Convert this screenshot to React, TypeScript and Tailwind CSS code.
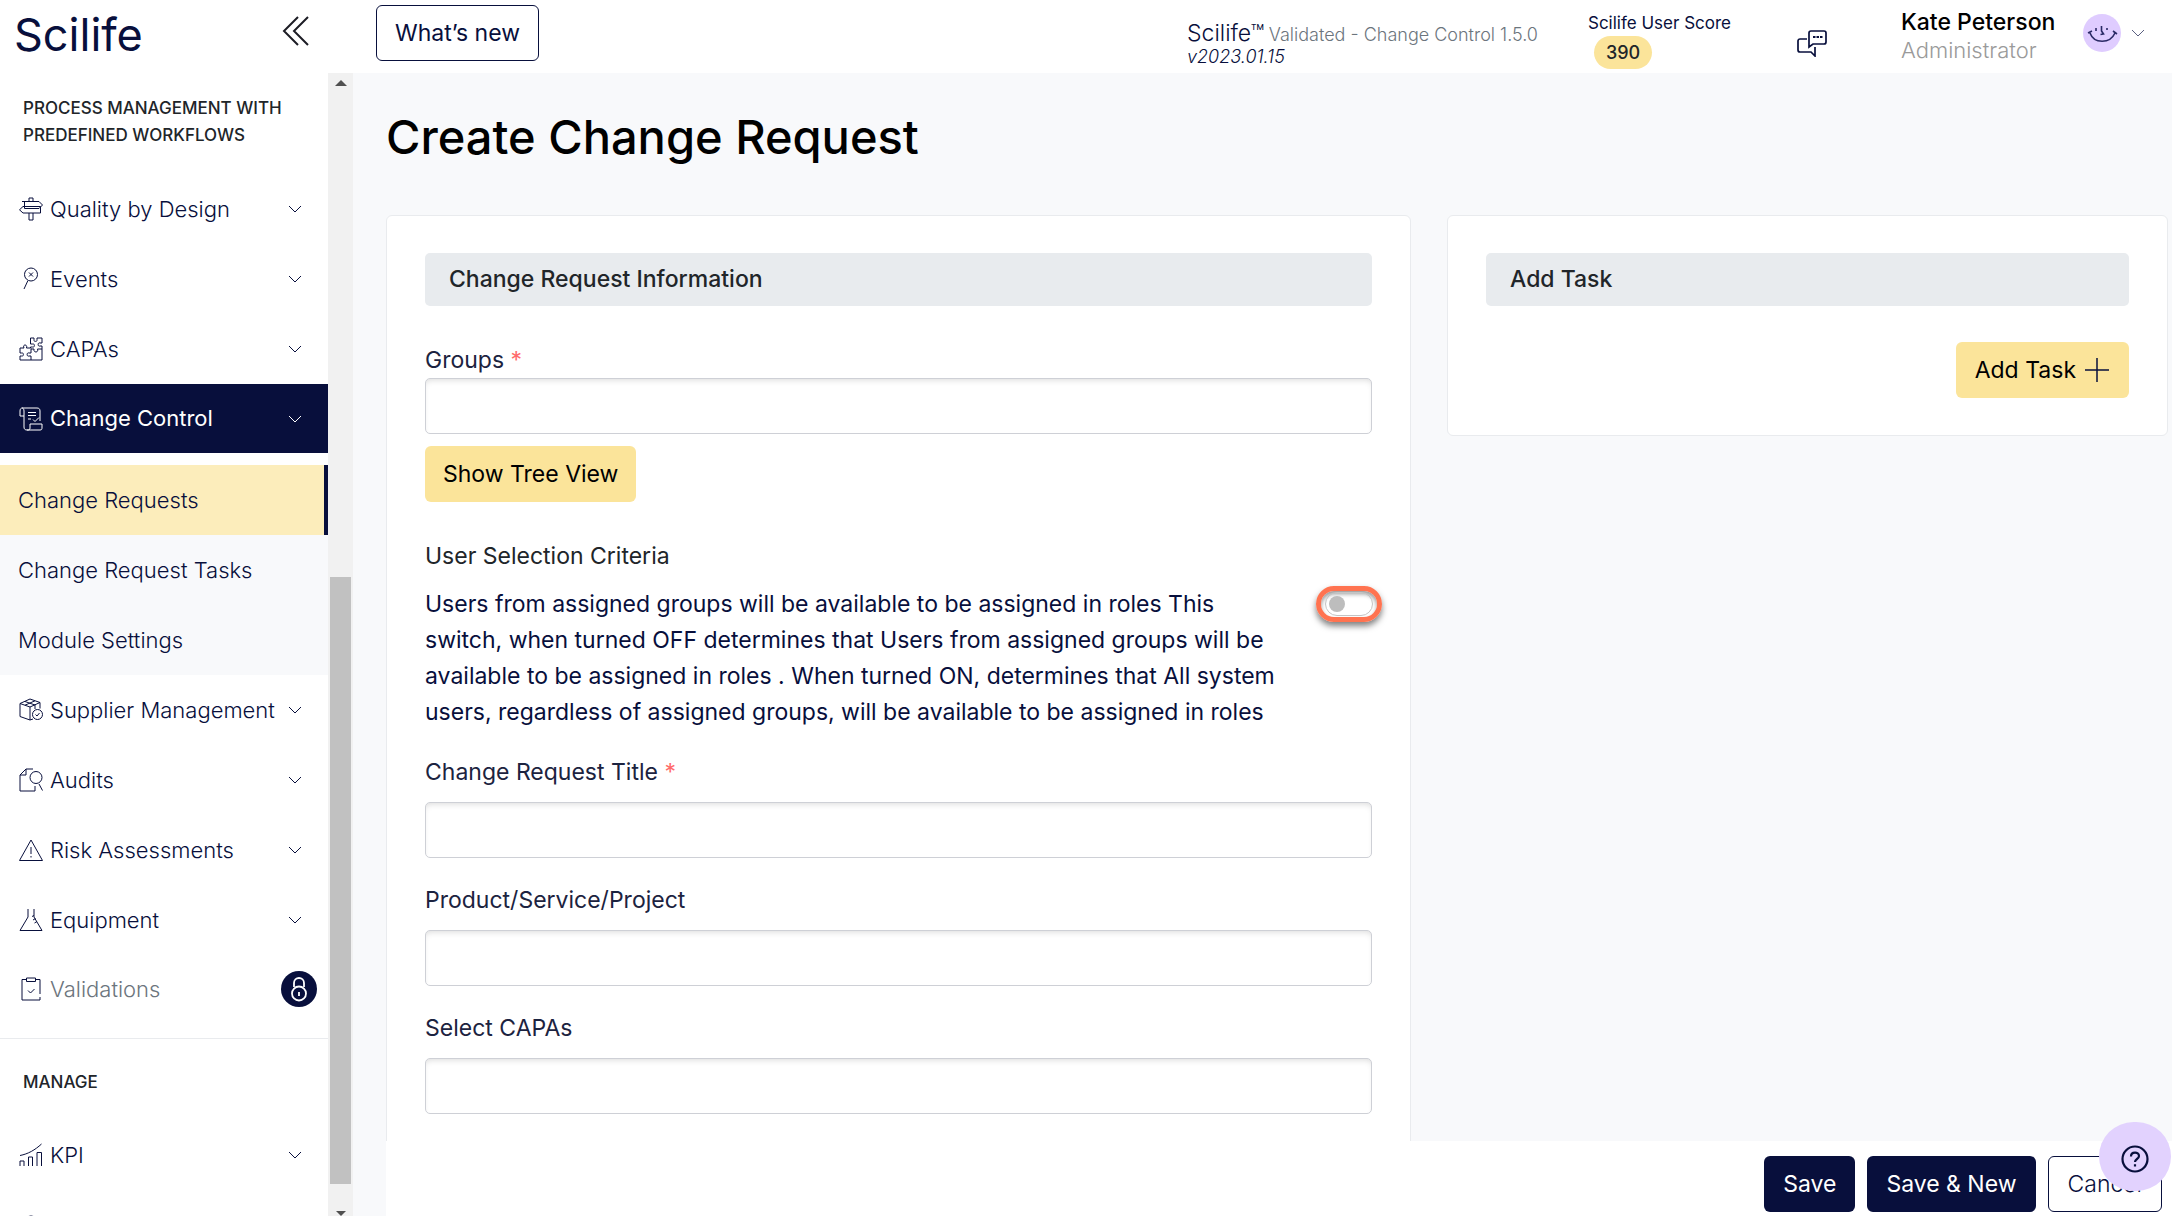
import type { ReactNode } from 'react'
import clsx from 'clsx'

const icons: Record<string, ReactNode> = {
  design: (
    <>
      <path d="M10 4V1h4v3M10 16v7h4v-7M3 4.500h17l3.500 3.500-3.500 3.500H5.500V4.500" />
      <path d="M20 9.500h1.500V16H4L.500 12.800 4 9.500h16" />
    </>
  ),
  events: (
    <>
      <circle cx="12" cy="7.500" r="6.500" />
      <path d="M8.800 13.800 5 22M10 5.500l4 4M14 5.500l-4 4" />
    </>
  ),
  capas: (
    <>
      <path d="M11.500 1h3.500v1.500c-1 2.500 4 2.500 3 0V1h5v5h-2c-2.500-1-2.500 4 0 3h2v14h-22v-4h1.500c2.500 1 2.500-4 0-3H1v-5h4c-2-4 4-4 2.500 0h4v-1h2c2.500 1 2.500-4 0-3h-2z" />
      <path d="M12 11.500v4.500h-2c-2.500-1-2.500 4 0 3h2v4M12 12h3c-1 4 5 4 3.500 0H23" />
    </>
  ),
  change: (
    <>
      <path d="M5 9H1V4c0-4 4-4 4 0v16c0 2 1 3 3 3h13c2 0 2-1 2-3v-3H11v4c0 2-1 2-3 2M3 1h15c2 0 3 1 3 3v10" />
      <path d="M9 5.500h8M9 8.500h8M9 12h3M14 12.500l2 2 4-4" />
    </>
  ),
  supplier: (
    <>
      <path d="M1 5.500 11 1l10 3.500v6M1 5.500v13L11 22l3-1M1 5.500 11 9l10-4.500M11 9v13M6 3.500l10 3.500v4M16 2.800 6 7.200" />
      <circle cx="18.500" cy="16.500" r="5" />
      <path d="m16.500 16.500 1.500 1.500 2.500-3" />
    </>
  ),
  audits: (
    <>
      <path d="M14 1H7L1 7v16h15v-5M7 1v6H1" />
      <circle cx="17" cy="9.500" r="6" />
      <path d="m20 16 3.500 6.500" />
    </>
  ),
  risk: <path d="M12 2 23.500 22.500H.500zM12 9v7M12 18v1.500" />,
  equipment: <path d="M9 1v8L1 22.500h22L15 9V1M15 7.500l-2 1M16.500 10.500l-2.500 1.500M18 13.500 15.500 15" />,
  validations: (
    <>
      <path d="M7 2.500H3V23h18v-3M17 2.500h4V17" />
      <path d="M7.500 1h9v3.500h-9zM9 13.500l2.500 2.500 4-4" />
    </>
  ),
  kpi: <path d="M1 23v-5h4v5M9.500 23V14h4v9M18 23V9.500h4.500V23M1 12.500C9 11 16 7 22.500 1" />,
  next: <circle cx="12" cy="12" r="9" />,
}

const workflows = [
  { label: 'Supplier Management', icon: 'supplier' },
  { label: 'Audits', icon: 'audits' },
  { label: 'Risk Assessments', icon: 'risk' },
  { label: 'Equipment', icon: 'equipment' },
]

function Icon({ name }: { name: string }) {
  return (
    <svg viewBox="0 0 24 24" className="size-6 shrink-0" fill="none" stroke="currentColor" strokeWidth="1">
      {icons[name]}
    </svg>
  )
}

function Chevron() {
  return (
    <svg viewBox="0 0 14 8" className="h-2 w-3.5 shrink-0" fill="none" stroke="currentColor" strokeWidth="1">
      <path d="m1 1 6 6 6-6" />
    </svg>
  )
}

function NavItem({ label, icon, active }: { label: string; icon: string; active?: boolean }) {
  return (
    <button
      className={clsx(
        'flex w-full shrink-0 items-center gap-[7px] pl-[19px] pr-[26px] text-left',
        active ? 'h-[69px] bg-[#080f3c] text-white' : 'h-[70px] font-light'
      )}
    >
      <Icon name={icon} />
      <span className="flex-1 whitespace-nowrap">{label}</span>
      <Chevron />
    </button>
  )
}

function Field({ id, label, required, tight }: { id: string; label: string; required?: boolean; tight?: boolean }) {
  return (
    <div className={clsx('flex flex-col', !tight && 'gap-3')}>
      <label htmlFor={id} className="leading-9 text-[#1c2340]">
        {label} {required && <span className="text-[#ff6b6b]">*</span>}
      </label>
      <input
        id={id}
        type="text"
        className="h-14 w-full rounded-[5px] border border-[#ced0d6] px-4 shadow-[inset_0_4px_6px_-3px_rgba(0,0,0,0.15)] outline-none"
      />
    </div>
  )
}

function Header() {
  return (
    <header className="flex h-[73px] shrink-0 items-start">
      <div className="flex w-[376px] shrink-0 items-start pl-[14px]">
        <a href="#" className="w-[268px] pt-[10px] text-[45px] leading-[50px]">Scilife</a>
        <button aria-label="Collapse menu" className="pt-4 text-[#1d1d25]">
          <svg viewBox="0 0 28 30" className="h-[30px] w-7" fill="none" stroke="currentColor" strokeWidth="2">
            <path d="M16 1 2 15l14 14M26 1 12 15l14 14" />
          </svg>
        </button>
      </div>
      <button className="mt-[5px] h-14 rounded-md border border-[#080f3c] px-[18px] text-[23px]">What’s new</button>
      <div className="ml-auto w-[401px] pt-[22px] leading-[22px]">
        <div className="whitespace-nowrap">
          <span className="text-[23px] font-light">Scilife™</span>{' '}
          <span className="text-lg/[22px] font-light text-[#6c757d]">Validated - Change Control 1.5.0</span>
        </div>
        <div className="text-lg/[22px] font-light italic">v2023.01.15</div>
      </div>
      <div className="w-[209px] pt-3 text-[17px] leading-[22px]">
        <div>Scilife User Score</div>
        <span className="ml-[6px] mt-0.5 inline-flex h-[33px] items-center rounded-full bg-[#fbe49a] px-3 text-lg font-medium text-[#212529]">390</span>
      </div>
      <button aria-label="Messages" className="w-[104px] pt-[29px]">
        <svg viewBox="0 0 30 28" className="h-7 w-[30px]" fill="none" stroke="currentColor" strokeWidth="1.700">
          <path d="M10 10H3a2 2 0 0 0-2 2v9a2 2 0 0 0 2 2h11l4 4v-9" />
          <path d="M14 2h13a2 2 0 0 1 2 2v9a2 2 0 0 1-2 2H16l-4 3V4a2 2 0 0 1 2-2z" />
          <path d="M16 8h2.500M19.500 8H22M23 8h2.500" strokeWidth="2.200" />
        </svg>
      </button>
      <div className="w-[182px] pt-2 leading-7">
        <div className="whitespace-nowrap text-[23px] font-medium text-black">Kate Peterson</div>
        <div className="text-[22px] font-light text-[#9a9a9a]">Administrator</div>
      </div>
      <button aria-label="Account menu" className="flex items-center gap-[10px] pr-[27px] pt-[14px] text-[#5a6080]">
        <svg viewBox="0 0 38 38" className="size-[38px]" fill="none" stroke="#2b2a66" strokeWidth="1.600">
          <circle cx="19" cy="19" r="19" fill="#dfccff" stroke="none" />
          <path d="M7 19c4 11 20 11 25 0M5 19l4-2M30 17l4 3M18.500 12v5l2 3-3 .500M13 14v3M24 14v2" />
        </svg>
        <Chevron />
      </button>
    </header>
  )
}

function Sidebar() {
  return (
    <aside className="flex w-[353px] shrink-0 overflow-hidden">
      <nav className="flex w-[328px] shrink-0 flex-col overflow-hidden text-[22px]">
        <h2 className="pb-[25px] pl-[23px] pr-8 pt-[22px] text-[17px] font-medium leading-[27px] text-[#212529]">
          PROCESS MANAGEMENT WITH PREDEFINED WORKFLOWS
        </h2>
        <NavItem label="Quality by Design" icon="design" />
        <NavItem label="Events" icon="events" />
        <NavItem label="CAPAs" icon="capas" />
        <NavItem label="Change Control" icon="change" active />
        <div className="mt-3 flex shrink-0 flex-col bg-[#f8f9fb] font-light">
          <a href="#" className="flex h-[70px] items-center border-r-4 border-[#080f3c] bg-[#fcedbb] pl-[18px]">Change Requests</a>
          <a href="#" className="flex h-[70px] items-center pl-[18px]">Change Request Tasks</a>
          <a href="#" className="flex h-[70px] items-center pl-[18px]">Module Settings</a>
        </div>
        {workflows.map(w => (
          <NavItem key={w.label} label={w.label} icon={w.icon} />
        ))}
        <button className="flex h-[68px] shrink-0 items-center gap-[7px] pl-[19px] pr-[11px] text-left font-light">
          <Icon name="validations" />
          <span className="flex-1 text-[#6c757d]">Validations</span>
          <svg viewBox="0 0 36 36" className="size-9" fill="none" stroke="#fff" strokeWidth="1.800">
            <circle cx="18" cy="18" r="18" fill="#080f3c" stroke="none" />
            <circle cx="18" cy="22.500" r="7" />
            <path d="M13 16v-4a5 5 0 0 1 10 0v4M18 21v4" />
          </svg>
        </button>
        <h2 className="mt-[15px] border-t border-[#e9ebee] pb-6 pl-[23px] pt-[30px] text-[17px] font-medium leading-[27px] text-[#212529]">MANAGE</h2>
        <NavItem label="KPI" icon="kpi" />
        <div className="flex h-[70px] shrink-0 items-center pl-[19px]">
          <Icon name="next" />
        </div>
      </nav>
      <div className="flex w-[25px] flex-col items-center justify-between bg-[#f1f1f1] pt-[7px]">
        <svg viewBox="0 0 12 6" className="h-1.5 w-3"><path d="M0 6 6 0l6 6z" fill="#505050" /></svg>
        <div className="mb-[27px] mt-auto h-[607px] w-[21px] bg-[#c1c1c1]" />
        <svg viewBox="0 0 12 6" className="h-[5px] w-3 shrink-0"><path d="m0 0 6 6 6-6z" fill="#505050" /></svg>
      </div>
    </aside>
  )
}

function Card({ title, children }: { title: string; children: ReactNode }) {
  return (
    <section className="rounded-md border border-[#e9ebee] bg-white px-[38px] py-[37px]">
      <h2 className="flex h-[53px] items-center rounded-[5px] bg-[#e8ebee] px-6 font-medium text-[#212529]">{title}</h2>
      {children}
    </section>
  )
}

export default function App() {
  return (
    <div className="flex h-screen flex-col overflow-hidden bg-white font-[Inter,sans-serif] text-[#080f3c]">
      <Header />
      <div className="flex min-h-0 flex-1">
        <Sidebar />
        <div className="flex min-w-0 flex-1 flex-col bg-[#f8f9fb] pl-[33px]">
          <main className="min-h-0 flex-1 overflow-hidden pr-1">
            <h1 className="pt-[34px] text-[47px] font-medium leading-[60px] text-black">Create Change Request</h1>
            <div className="mt-12 grid grid-cols-[1025fr_721fr] items-start gap-9 text-[23px]">
              <Card title="Change Request Information">
                <form className="flex flex-col gap-6 pt-9">
                  <div>
                    <Field id="groups" label="Groups" required tight />
                    <button type="button" className="mt-3 h-14 rounded-md bg-[#fbe49a] px-[18px] text-black">Show Tree View</button>
                  </div>
                  <div className="pt-3">
                    <div className="leading-9 text-[#212529]">User Selection Criteria</div>
                    <div className="-mr-[10px] flex items-start gap-7 pt-3">
                      <p id="criteria" className="flex-1 leading-9">
                        Users from assigned groups will be available to be assigned in roles This switch, when turned OFF
                        determines that Users from assigned groups will be available to be assigned in roles . When turned
                        ON, determines that All system users, regardless of assigned groups, will be available to be
                        assigned in roles
                      </p>
                      <span className="flex h-9 w-[66px] items-center justify-center rounded-full border-[5px] border-[#ff7350] shadow-[0_4px_6px_rgba(0,0,0,0.5),inset_0_3px_4px_rgba(0,0,0,0.4)]">
                        <input
                          type="checkbox"
                          role="switch"
                          aria-labelledby="criteria"
                          className="flex h-6 w-12 appearance-none items-center rounded-full border border-[#c4c4c4] px-[3px] before:size-4 before:rounded-full before:bg-[#bdbdbd] checked:justify-end"
                        />
                      </span>
                    </div>
                  </div>
                  <Field id="title" label="Change Request Title" required />
                  <Field id="product" label="Product/Service/Project" />
                  <Field id="capas" label="Select CAPAs" />
                </form>
              </Card>
              <Card title="Add Task">
                <div className="flex justify-end pt-9">
                  <button className="flex h-14 items-center gap-2 rounded-md bg-[#fbe49a] px-[19px] text-black">
                    Add Task
                    <svg viewBox="0 0 26 26" className="size-[26px]" stroke="#080f3c" strokeWidth="1.500">
                      <path d="M13 1v24M1 13h24" />
                    </svg>
                  </button>
                </div>
              </Card>
            </div>
          </main>
          <footer className="flex h-[75px] shrink-0 items-end justify-end gap-3 bg-white pb-1 pr-[10px] text-[23px]">
            <button className="h-14 rounded-md bg-[#080f3c] px-[19px] text-white">Save</button>
            <button className="h-14 rounded-md bg-[#080f3c] px-[19px] text-white">Save &amp; New</button>
            <button className="h-14 rounded-md border border-[#080f3c] px-[19px] font-light">Cancel</button>
          </footer>
        </div>
      </div>
      <button aria-label="Help" className="fixed bottom-[25px] right-px flex h-[69px] w-[72px] items-center justify-center rounded-full bg-[#e2d2fe] pt-1">
        <svg viewBox="0 0 28 28" className="size-7" fill="none" stroke="currentColor" strokeWidth="2.200">
          <circle cx="14" cy="14" r="12.500" />
          <path d="M10 11.500c0-5 8-5 8-.500 0 3-4 3-4 6M14 19.200v2.200" />
        </svg>
      </button>
    </div>
  )
}
